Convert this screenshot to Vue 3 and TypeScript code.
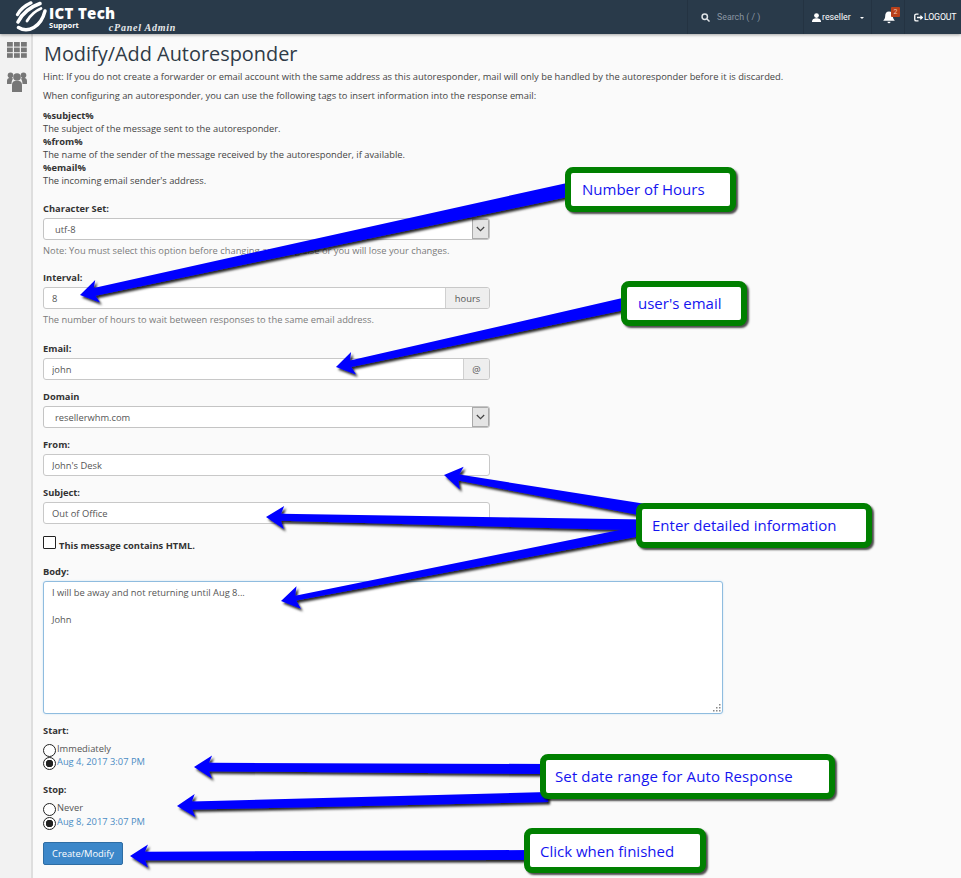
<script setup lang="ts">
interface Arrow { from: [number, number]; to: [number, number]; w0: number; w1: number }
const arrows: Arrow[] = [
  { from: [572, 189], to: [80, 295], w0: 14, w1: 8 },
  { from: [628, 303], to: [336, 367], w0: 12, w1: 6.5 },
  { from: [645, 510], to: [444, 475], w0: 12, w1: 6 },
  { from: [645, 525], to: [266, 517], w0: 11, w1: 7 },
  { from: [645, 530], to: [281, 601], w0: 10, w1: 5 },
  { from: [548, 769], to: [194, 767], w0: 10, w1: 8.5 },
  { from: [548, 797], to: [177, 806], w0: 10, w1: 8 },
  { from: [532, 855], to: [130, 856], w0: 10, w1: 8.5 },
]
function points(a: Arrow): string {
  const [x0, y0] = a.from
  const [x1, y1] = a.to
  const len = Math.hypot(x1 - x0, y1 - y0)
  const ux = (x1 - x0) / len
  const uy = (y1 - y0) / len
  const nx = -uy
  const ny = ux
  const head = 18
  const hw = 11.5
  const bx = x1 - ux * head
  const by = y1 - uy * head
  const neckx = x1 - ux * (head - 3)
  const necky = y1 - uy * (head - 3)
  const p: [number, number][] = [
    [x0 + (nx * a.w0) / 2, y0 + (ny * a.w0) / 2],
    [neckx + (nx * a.w1) / 2, necky + (ny * a.w1) / 2],
    [bx + nx * hw, by + ny * hw],
    [x1, y1],
    [bx - nx * hw, by - ny * hw],
    [neckx - (nx * a.w1) / 2, necky - (ny * a.w1) / 2],
    [x0 - (nx * a.w0) / 2, y0 - (ny * a.w0) / 2],
  ]
  return p.map((q) => q.map((v) => v.toFixed(1)).join(',')).join(' ')
}
const callouts = [
  { text: 'Number of Hours', cls: 'c1' },
  { text: "user's email", cls: 'c2' },
  { text: 'Enter detailed information', cls: 'c3' },
  { text: 'Set date range for Auto Response', cls: 'c4' },
  { text: 'Click when finished', cls: 'c5' },
]
const tags = [
  { tag: '%subject%', desc: 'The subject of the message sent to the autoresponder.' },
  { tag: '%from%', desc: 'The name of the sender of the message received by the autoresponder, if available.' },
  { tag: '%email%', desc: "The incoming email sender's address." },
]
</script>

<template>
  <div class="page">
    <header class="topbar">
      <div class="brand">
        <svg class="swirl" width="32" height="32" viewBox="0 0 32 32" fill="none" stroke="#fff" stroke-linecap="round">
          <path d="M2.500 13.500 C5 9 9 5 16 1.800" stroke-width="3.200" />
          <path d="M3 21 C7 13 15 6 25 2.500" stroke-width="3.600" />
          <path d="M12 20 C15 15 20 10 26 7.500" stroke-width="2.800" />
          <path d="M3.500 26.500 C13 32.500 26 26 30 10" stroke-width="3.400" />
        </svg>
        <div class="brand-text">
          <div class="brand-name">ICT Tech</div>
          <div class="brand-sub"><span class="support">Support</span><span class="admin">cPanel Admin</span></div>
        </div>
      </div>
      <nav class="nav">
        <div class="nav-item search">
          <svg width="9" height="9" viewBox="0 0 12 12" fill="none" stroke="#dfe3e7" stroke-width="2"><circle cx="5" cy="5" r="3.600" /><path d="M8 8l3.400 3.400" /></svg>
          <span>Search ( / )</span>
        </div>
        <div class="nav-item user">
          <svg width="9" height="9" viewBox="0 0 12 12" fill="#fff"><circle cx="6" cy="3.400" r="3.200" /><path d="M0 12c0-4 2.500-5 6-5s6 1 6 5z" /></svg>
          <span>reseller</span>
          <i class="caret"></i>
        </div>
        <div class="nav-item bell">
          <svg width="12" height="13" viewBox="0 0 12 13" fill="#fff"><path d="M6 .5c2.600 0 3.800 2 3.800 4.500 0 2.500 1 3.500 2 4.800H.2c1-1.300 2-2.300 2-4.800C2.200 2.500 3.400.5 6 .5z" /><path d="M4.500 10.800h3a1.500 1.500 0 0 1-3 0z" /></svg>
          <b class="badge">2</b>
        </div>
        <div class="nav-item logout">
          <svg width="9" height="9" viewBox="0 0 12 12" fill="none" stroke="#fff" stroke-width="1.800"><path d="M6 1.500H3a2 2 0 0 0-2 2v5a2 2 0 0 0 2 2h3" /><path d="M4 6h7M8.500 3.500L11 6 8.500 8.500" /></svg>
          <span>LOGOUT</span>
        </div>
      </nav>
    </header>

    <div class="body">
      <aside class="side">
        <svg width="20" height="16" viewBox="0 0 20 16" fill="#777">
          <rect x="0" y="0" width="5.800" height="4.600" /><rect x="7" y="0" width="5.800" height="4.600" /><rect x="14" y="0" width="5.800" height="4.600" />
          <rect x="0" y="5.600" width="5.800" height="4.600" /><rect x="7" y="5.600" width="5.800" height="4.600" /><rect x="14" y="5.600" width="5.800" height="4.600" />
          <rect x="0" y="11.200" width="5.800" height="4.600" /><rect x="7" y="11.200" width="5.800" height="4.600" /><rect x="14" y="11.200" width="5.800" height="4.600" />
        </svg>
        <svg width="20" height="20" viewBox="0 0 20 20" fill="#777">
          <circle cx="3.500" cy="3.200" r="2.800" /><circle cx="16.500" cy="3.200" r="2.800" /><circle cx="10" cy="5" r="3.800" />
          <path d="M0 12V9c0-2 1-3 2.500-3h2c.7 0 1.200.2 1.600.6C5.300 8 4.500 9.500 4.500 12z" />
          <path d="M20 12V9c0-2-1-3-2.500-3h-2c-.7 0-1.200.2-1.600.6.8 1.400 1.600 2.900 1.600 5.400z" />
          <path d="M5 20v-7c0-2.500 1.500-4 3-4h4c1.500 0 3 1.500 3 4v7z" />
        </svg>
      </aside>

      <main class="main">
        <h1>Modify/Add Autoresponder</h1>
        <p class="hint">Hint: If you do not create a forwarder or email account with the same address as this autoresponder, mail will only be handled by the autoresponder before it is discarded.</p>
        <p class="hint2">When configuring an autoresponder, you can use the following tags to insert information into the response email:</p>
        <dl class="tags">
          <template v-for="t in tags" :key="t.tag">
            <dt>{{ t.tag }}</dt>
            <dd>{{ t.desc }}</dd>
          </template>
        </dl>

        <form class="form" @submit.prevent>
          <div class="group g-charset">
            <label>Character Set:</label>
            <div class="select"><span>utf-8</span><i class="sel-btn"><svg width="9" height="6" viewBox="0 0 9 6" fill="none" stroke="#444" stroke-width="1.200"><path d="M.8 1l3.700 3.700L8.200 1" /></svg></i></div>
            <p class="help">Note: You must select this option before changing anything else or you will lose your changes.</p>
          </div>
          <div class="group g-interval">
            <label>Interval:</label>
            <div class="field"><input value="8" readonly /><span class="addon hours">hours</span></div>
            <p class="help">The number of hours to wait between responses to the same email address.</p>
          </div>
          <div class="group g-email">
            <label>Email:</label>
            <div class="field"><input value="john" readonly /><span class="addon at">@</span></div>
          </div>
          <div class="group">
            <label>Domain</label>
            <div class="select"><span>resellerwhm.com</span><i class="sel-btn"><svg width="9" height="6" viewBox="0 0 9 6" fill="none" stroke="#444" stroke-width="1.200"><path d="M.8 1l3.700 3.700L8.200 1" /></svg></i></div>
          </div>
          <div class="group">
            <label>From:</label>
            <div class="field"><input value="John's Desk" readonly /></div>
          </div>
          <div class="group">
            <label>Subject:</label>
            <div class="field"><input value="Out of Office" readonly /></div>
          </div>
          <div class="check-row"><span class="checkbox"></span><strong>This message contains HTML.</strong></div>
          <div class="group g-body">
            <label>Body:</label>
            <div class="area-wrap">
              <textarea readonly>I will be away and not returning until Aug 8...

John</textarea>
              <svg class="grip" width="9" height="9" viewBox="0 0 9 9" fill="#888"><rect x="7" y="1" width="1.500" height="1.500" /><rect x="4" y="4" width="1.500" height="1.500" /><rect x="7" y="4" width="1.500" height="1.500" /><rect x="1" y="7" width="1.500" height="1.500" /><rect x="4" y="7" width="1.500" height="1.500" /><rect x="7" y="7" width="1.500" height="1.500" /></svg>
            </div>
          </div>
          <div class="group g-radio">
            <label>Start:</label>
            <div class="radio r1"><i class="dot"></i><span>Immediately</span></div>
            <div class="radio r2"><i class="dot on"></i><a>Aug 4, 2017 3:07 PM</a></div>
          </div>
          <div class="group g-radio g-stop">
            <label>Stop:</label>
            <div class="radio r1"><i class="dot"></i><span>Never</span></div>
            <div class="radio r2"><i class="dot on"></i><a>Aug 8, 2017 3:07 PM</a></div>
          </div>
          <button class="btn" type="button">Create/Modify</button>
        </form>
      </main>
    </div>

    <svg class="overlay" width="961" height="878" viewBox="0 0 961 878" aria-hidden="true">
      <defs>
        <filter id="arrow-shadow" x="-10%" y="-50%" width="120%" height="200%">
          <feDropShadow dx="2" dy="2.500" stdDeviation="1.200" flood-color="#000" flood-opacity=".85" />
        </filter>
      </defs>
      <polygon v-for="(a, i) in arrows" :key="i" :points="points(a)" fill="#0000ff" filter="url(#arrow-shadow)" />
    </svg>
    <div v-for="c in callouts" :key="c.cls" class="callout" :class="c.cls">{{ c.text }}</div>
  </div>
</template>

<style>
html, body { margin: 0; background: #fafafa; }
</style>

<style scoped>
.page {
  position: relative;
  width: 961px;
  height: 878px;
  overflow: hidden;
  background: #fafafa;
  color: #444;
  font-family: "Open Sans", sans-serif;
  font-size: 9.33px;
}
.topbar {
  height: 34px;
  background: #293a4a;
  box-shadow: 0 1px 3px rgba(0, 0, 0, .35);
  display: flex;
  justify-content: space-between;
  position: relative;
  z-index: 1;
}
.brand { display: flex; align-items: flex-start; padding: 1px 0 0 15px; }
.swirl { margin-right: 2px; }
.brand-text { color: #fff; padding-top: 6px; }
.brand-name { font: 800 15px/13px "Open Sans", sans-serif; letter-spacing: .3px; height: 13px; }
.brand-sub { display: flex; align-items: flex-start; height: 15px; }
.support { font: 700 7.500px/10px "Open Sans", sans-serif; }
.admin { font: italic 700 10px/12px "Liberation Serif", serif; letter-spacing: .75px; margin: 2px 0 0 30px; color: #e6e8ea; }
.nav { display: flex; height: 34px; }
.nav-item {
  display: flex;
  align-items: center;
  gap: 1px;
  border-left: 1px solid #243342;
  color: #fff;
  font: 400 8.800px/12px Roboto, sans-serif;
  box-sizing: border-box;
}
.search { width: 116px; padding-left: 13px; gap: 7px; color: #8b97a3; }
.user { width: 68px; padding-left: 8px; }
.caret { margin-left: 8px; border: 2.500px solid transparent; border-top-color: #fff; border-bottom: 0; margin-top: 2px; }
.bell { width: 33px; padding-left: 11px; position: relative; }
.badge {
  position: absolute;
  left: 19px;
  top: 7px;
  width: 9px;
  height: 10px;
  background: #b8401a;
  color: #f3c5b5;
  font: 400 7px/10px Roboto, sans-serif;
  text-align: center;
  border-radius: 1px;
}
.logout { width: 57px; padding-left: 9px; gap: 1px; letter-spacing: -.2px; }
.body { display: flex; height: 844px; }
.side {
  width: 33px;
  box-sizing: border-box;
  background: #f2f2f2;
  border-right: 2px solid #dedede;
  display: flex;
  flex-direction: column;
  align-items: center;
  gap: 14px;
  padding-top: 8px;
  padding-left: 3px;
}
.main { flex: 1; padding: 0 0 0 10px; min-width: 0; }
h1 {
  font: 400 19.900px/26px "Open Sans", sans-serif;
  color: #2f3b47;
  margin: 7px 0 0 1px;
}
.hint { margin: 3px 0 0; line-height: 13px; }
.hint2 { margin: 6px 0 0; line-height: 13px; }
.tags { margin: 7px 0 0; line-height: 13px; }
dt { font-weight: 700; color: #333; }
dd { margin: 0; }
.form { margin-top: 15px; }
.group { width: 447px; margin-bottom: 10px; }
label { display: block; font-weight: 700; color: #333; line-height: 13px; margin-bottom: 3px; }
.select, .field {
  display: flex;
  height: 22px;
  box-sizing: border-box;
  border: 1px solid #c8c8c8;
  border-radius: 3px;
  background: #fff;
  overflow: hidden;
}
.select { padding-left: 11px; align-items: center; justify-content: space-between; border-color: #c4c4c4; color: #555; }
.sel-btn {
  width: 17px;
  height: 20px;
  box-sizing: border-box;
  border: 1px solid #aaa;
  background: #e4e4e4;
  display: flex;
  align-items: center;
  justify-content: center;
}
.field input {
  flex: 1;
  min-width: 0;
  border: 0;
  outline: 0;
  padding: 0 0 0 8px;
  font: 400 9.330px "Open Sans", sans-serif;
  color: #555;
  background: transparent;
}
.addon {
  display: flex;
  align-items: center;
  justify-content: center;
  background: #eee;
  border-left: 1px solid #d0d0d0;
  color: #555;
}
.hours { width: 43px; }
.at { width: 25px; }
.help { margin: 4px 0 0; line-height: 13px; color: #7a7a7a; }
.g-charset { margin-bottom: 14px; }
.g-interval { margin-bottom: 16px; }
.check-row { display: flex; align-items: flex-end; gap: 3px; height: 14px; margin-top: 12px; margin-bottom: 15px; }
.check-row strong { line-height: 11px; color: #333; margin-bottom: -1px; }
.checkbox { width: 11px; height: 11px; border: 1px solid #222; background: #fff; border-radius: 1px; margin-bottom: 1px; }
.g-body { width: 680px; margin-bottom: 10px; }
.area-wrap { position: relative; }
.grip { position: absolute; right: 2px; bottom: 2px; }
textarea {
  display: block;
  width: 680px;
  height: 133px;
  box-sizing: border-box;
  resize: none;
  border: 1px solid #8fbcdf;
  border-radius: 3px;
  background: #fff;
  outline: 0;
  padding: 4px 8px;
  font: 400 9.330px/13.500px "Open Sans", sans-serif;
  color: #555;
  box-shadow: 0 0 2px rgba(102, 175, 233, .35);
}
.g-radio label { margin-bottom: 5px; }
.radio { display: flex; align-items: flex-start; height: 13px; line-height: 12px; }
.r1 { margin-top: 6px; }
.r2 { margin-top: 0; }
.g-stop { margin-top: 14px; }
.g-stop .r2 { margin-top: 1px; }
.radio span { color: #555; }
.radio a { color: #4a8cc4; }
.dot {
  width: 13px;
  height: 13px;
  margin-top: 1px;
  margin-right: 1px;
  flex: none;
  box-sizing: border-box;
  border: 1px solid #222;
  border-radius: 50%;
  background: #fff;
}
.dot.on { background: radial-gradient(circle, #222 0 3.500px, #fff 4px); }
.btn {
  display: block;
  width: 80px;
  height: 23px;
  margin-top: 13px;
  padding: 0;
  border: 1px solid #2e6da4;
  border-radius: 2px;
  background: #3c87c9;
  color: #fff;
  font: 400 9.330px "Open Sans", sans-serif;
}
.overlay { position: absolute; left: 0; top: 0; pointer-events: none; z-index: 2; }
.callout {
  position: absolute;
  z-index: 3;
  box-sizing: border-box;
  border: 6px solid #008000;
  border-radius: 8px;
  background: #fff;
  box-shadow: 2px 2px 2px rgba(0, 0, 0, .7);
  color: #1515f0;
  font: 400 15px/33px "Open Sans", sans-serif;
  height: 45px;
  padding-left: 11px;
  white-space: nowrap;
}
.c1 { left: 565px; top: 167px; width: 171px; }
.c2 { left: 621px; top: 281px; width: 126px; }
.c3 { left: 636px; top: 503px; width: 236px; padding-left: 10px; }
.c4 { left: 540px; top: 754px; width: 295px; padding-left: 9px; letter-spacing: .12px; }
.c5 { left: 524px; top: 828px; width: 182px; padding-left: 10px; line-height: 34px; }
</style>
